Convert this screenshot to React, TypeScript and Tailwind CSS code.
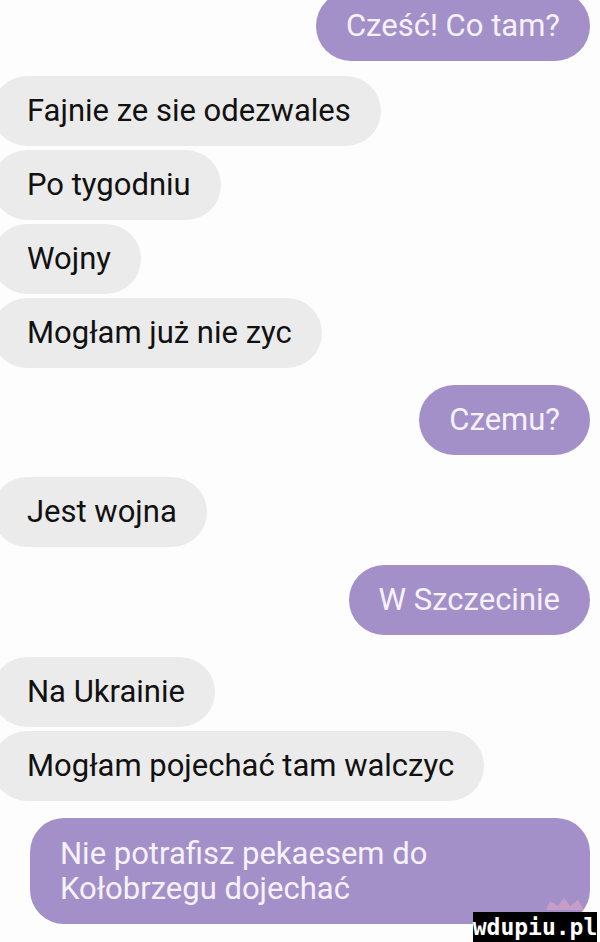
import React from "react";

type Msg = { text: React.ReactNode; mine: boolean; mt: string };

const messages: Msg[] = [
  { text: "Cześć! Co tam?", mine: true, mt: "mt-[-9px]" },
  { text: "Fajnie ze sie odezwales", mine: false, mt: "mt-[15px]" },
  { text: "Po tygodniu", mine: false, mt: "mt-[4px]" },
  { text: "Wojny", mine: false, mt: "mt-[4px]" },
  { text: "Mogłam już nie zyc", mine: false, mt: "mt-[4px]" },
  { text: "Czemu?", mine: true, mt: "mt-[17px]" },
  { text: "Jest wojna", mine: false, mt: "mt-[22px]" },
  { text: "W Szczecinie", mine: true, mt: "mt-[18px]" },
  { text: "Na Ukrainie", mine: false, mt: "mt-[22px]" },
  { text: "Mogłam pojechać tam walczyc", mine: false, mt: "mt-[4px]" },
];

function Bubble({ m }: { m: Msg }) {
  if (m.mine) {
    return (
      <div className={`flex justify-end pr-[10px] ${m.mt}`}>
        <div className="flex h-[70px] items-center rounded-full bg-[#a390c8] px-[30px] text-[31px] text-[#f6f2fb]">
          {m.text}
        </div>
      </div>
    );
  }
  return (
    <div className={`flex justify-start ${m.mt}`}>
      <div className="ml-[-8px] flex h-[70px] items-center rounded-full bg-[#ebebeb] pl-[35px] pr-[30px] text-[31px] text-[#111111]">
        {m.text}
      </div>
    </div>
  );
}

export default function App() {
  return (
    <div
      className="relative h-[942px] w-[600px] overflow-hidden bg-[#fdfdfd]"
      style={{ fontFamily: "Roboto, 'Noto Sans', sans-serif" }}
    >
      <div className="flex flex-col">
        {messages.map((m, i) => (
          <Bubble key={i} m={m} />
        ))}
        <div className="mt-[17px] flex pl-[30px] pr-[10px]">
          <div className="flex h-[106px] w-full flex-col justify-center rounded-[34px] bg-[#a390c8] px-[30px] text-[31px] leading-[35px] text-[#f6f2fb]">
            <span>Nie potrafisz pekaesem do</span>
            <span>Kołobrzegu dojechać</span>
          </div>
        </div>
      </div>

      {/* faint pink crown above the site badge */}
      <svg
        className="absolute right-[12px] bottom-[30px]"
        width="44"
        height="16"
        viewBox="0 0 44 16"
      >
        <path
          d="M2 14 L6 5 L14 10 L20 2 L26 10 L34 4 L40 14 Z"
          fill="#e7a6c9"
          opacity="0.55"
        />
      </svg>

      <div className="absolute right-[3px] bottom-0 flex h-[30px] w-[124px] items-center justify-center bg-black">
        <span
          className="text-[23px] leading-none font-bold tracking-[0px] text-white"
          style={{ fontFamily: "'DejaVu Sans Mono', monospace" }}
        >
          wdupiu.pl
        </span>
      </div>
    </div>
  );
}
